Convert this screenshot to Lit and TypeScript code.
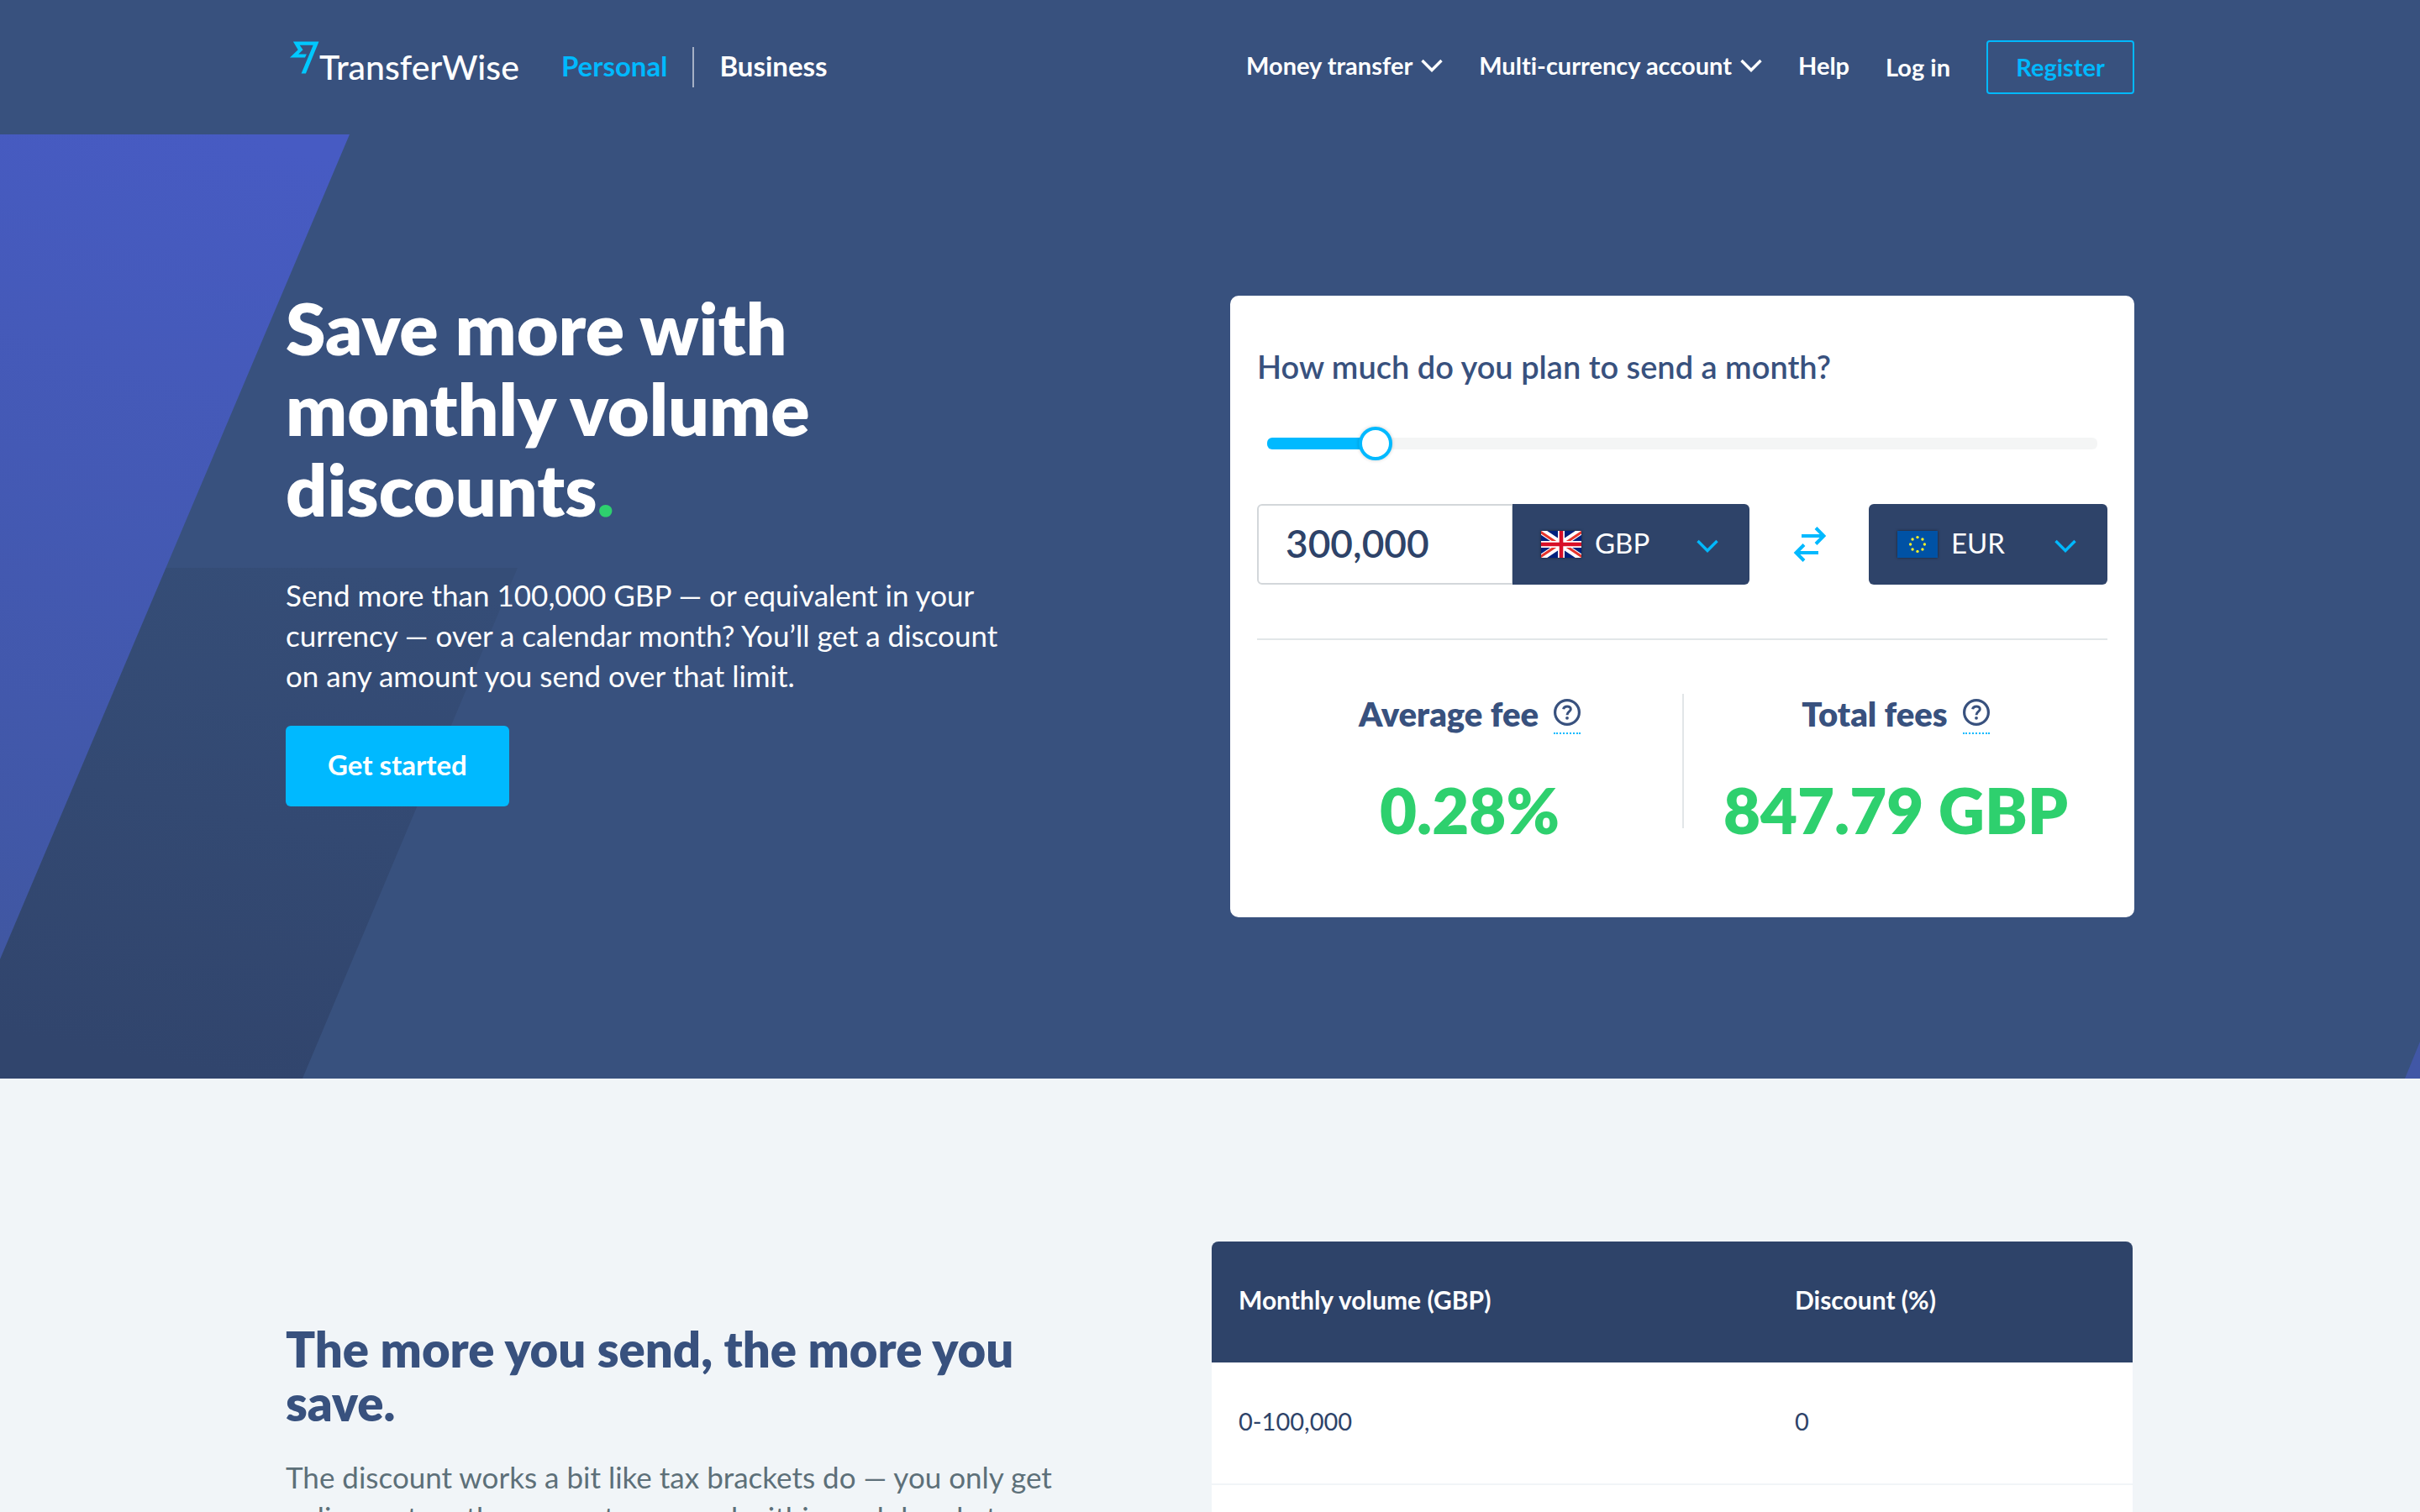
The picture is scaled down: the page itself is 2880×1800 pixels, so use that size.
import { LitElement, html, css, svg } from "lit";
import { customElement, state } from "lit/decorators.js";
import { styleMap } from "lit/directives/style-map.js";

const chevron = html`<svg class="chevron" width="26" height="16" viewBox="0 0 26 16" aria-hidden="true">
  <path d="M1.5 2 13 13.5 24.5 2" fill="none" stroke="currentColor" stroke-width="3.4" />
</svg>`;

const flagGbp = html`<svg class="flag" width="48" height="32" viewBox="0 0 48 32" aria-hidden="true">
  <rect width="48" height="32" fill="#00217d" />
  <path d="M0 0 48 32M48 0 0 32" stroke="#fff" stroke-width="8" />
  <path d="M-1 1 20 15M49 1 28 15M-1 31 20 17M49 31 28 17" stroke="#e5352c" stroke-width="3" />
  <path d="M24 0V32M0 16H48" stroke="#fff" stroke-width="8" />
  <path d="M24 0V32M0 16H48" stroke="#d80f27" stroke-width="4.6" />
</svg>`;

const euDots = [0, 1, 2, 3, 4, 5, 6, 7].map((i) => {
  const a = (i * Math.PI) / 4;
  return svg`<circle cx=${24 + 8.4 * Math.cos(a)} cy=${16 + 8.4 * Math.sin(a)} r="1.7" fill="#f6f02a" />`;
});

const flagEur = html`<svg class="flag" width="48" height="32" viewBox="0 0 48 32" aria-hidden="true">
  <rect width="48" height="32" fill="#0052a5" />
  ${euDots}
</svg>`;

const helpIcon = html`<svg width="32" height="32" viewBox="0 0 32 32" fill="none" stroke="currentColor" aria-hidden="true">
  <circle cx="16" cy="16" r="14.4" stroke-width="3.2" />
  <path d="M11.6 12.2C12.3 7.9 20.3 7.7 20.3 12.2C20.3 15.4 16 15 16 19.2" stroke-width="3" />
  <circle cx="16" cy="22.8" r="1.9" fill="currentColor" stroke="none" />
</svg>`;

const MAX_VOLUME = 2600000;

@customElement("tw-header")
export class TwHeader extends LitElement {
  static styles = css`
    :host {
      display: block; background: #38517e; color: #fff; font-family: Lato, "Open Sans", sans-serif;
      font-variant-ligatures: none;
    }
    .bar {
      box-sizing: border-box; height: 160px; max-width: 2200px; margin: 0 auto;
      display: flex; justify-content: space-between; align-items: center;
    }
    a, button { color: inherit; text-decoration: none; font: inherit; font-variant-ligatures: none; }
    .left, .right, .switch { display: flex; align-items: center; }
    .left { gap: 50px; }
    .switch { gap: 30px; font-size: 33px; font-weight: 700; line-height: 48px; }
    .switch a { padding-bottom: 4px; }
    .switch .active { color: #00b9ff; }
    .rule { width: 2px; height: 48px; background: rgba(255, 255, 255, 0.55); }
    .logo {
      display: flex; align-items: flex-start; height: 64px; padding-left: 4px;
      box-sizing: border-box; font-size: 41px; font-weight: 500; line-height: 48px;
    }
    .logo span { padding-top: 8px; }
    .right { gap: 43px; font-size: 29px; font-weight: 700; line-height: 48px; }
    .menu {
      display: flex; align-items: center; gap: 10px; background: none; border: 0;
      padding: 0 0 4px; line-height: 48px;
    }
    .help { padding-bottom: 4px; }
    .register {
      box-sizing: border-box; width: 176px; height: 64px; border: 2px solid #00b9ff; border-radius: 4px;
      color: #00b9ff; text-align: center; line-height: 60px;
    }
  `;
  render() {
    return html`<header class="bar">
      <div class="left">
        <a class="logo" href="#">
          <svg width="36" height="41" viewBox="0 0 37 41" aria-hidden="true">
            <path fill="#00c8ff" d="M5 1 11 11 1 20.5H19.5L21.5 16.5H11.5L17 11 13 5.3H29.5L15 40H20.5L36.5 1Z" />
          </svg>
          <span>TransferWise</span>
        </a>
        <nav class="switch">
          <a class="active" href="#">Personal</a>
          <div class="rule"></div>
          <a href="#">Business</a>
        </nav>
      </div>
      <nav class="right">
        <button class="menu">Money transfer ${chevron}</button>
        <button class="menu">Multi-currency account ${chevron}</button>
        <a class="help" href="#">Help</a>
        <a href="#">Log in</a>
        <a class="register" href="#">Register</a>
      </nav>
    </header>`;
  }
}

@customElement("tw-calculator")
export class TwCalculator extends LitElement {
  @state() private volume = 300000;

  static styles = css`
    :host {
      display: block; box-sizing: border-box; padding: 60px 32px 106px; background: #fff; border-radius: 10px;
      color: #38517e; font-family: Lato, "Open Sans", sans-serif;
    }
    .question { display: block; font-size: 38px; font-weight: 600; line-height: 48px; margin-bottom: 48px; }
    .slider { padding: 0 12px; margin-bottom: 52px; }
    .range {
      -webkit-appearance: none; appearance: none; display: block; width: 100%; height: 40px; margin: 0;
      background: none; --fill: 0%;
    }
    .range::-webkit-slider-runnable-track {
      height: 14px; border-radius: 6px;
      background: linear-gradient(90deg, #00b9ff var(--fill), #f4f5f5 var(--fill));
    }
    .range::-webkit-slider-thumb {
      -webkit-appearance: none; box-sizing: border-box; width: 40px; height: 40px; margin-top: -13px;
      border: 4px solid #00b9ff; border-radius: 50%; background: #fff; box-shadow: 0 0 4px rgba(0, 0, 0, 0.2);
    }
    .row { display: grid; grid-template-columns: 304fr 282fr 142fr 284fr; height: 96px; }
    .amount {
      box-sizing: border-box; width: 100%; min-width: 0; height: 100%; margin: 0; padding: 0 0 4px 32px;
      border: 2px solid #d3d7da; border-right-width: 1px; border-radius: 6px 0 0 6px; background: #fff;
      color: #2e4369; font: 600 46px Lato, "Open Sans", sans-serif;
    }
    .currency {
      display: grid; grid-template-columns: 34px 48px 1fr 26px 37px; align-items: center;
      background: #2e4369; color: #fff; border-radius: 6px; overflow: hidden;
    }
    .amount + .currency { border-radius: 0 6px 6px 0; }
    .currency select {
      grid-column: 1 / -1; grid-row: 1; width: 100%; height: 96px; -webkit-appearance: none; appearance: none;
      border: 0; margin: 0; padding: 0 0 4px 98px; background: none; color: inherit;
      font: 400 33px Lato, "Open Sans", sans-serif;
    }
    .flag { grid-column: 2; grid-row: 1; pointer-events: none; box-shadow: 0 0 3px rgba(0, 0, 0, 0.5); }
    .currency .chevron { grid-column: 4; grid-row: 1; pointer-events: none; color: #00b9ff; padding-top: 4px; }
    .swap { display: flex; align-items: center; justify-content: center; padding: 0; border: 0; background: none; }
    .divider { height: 2px; margin: 64px 0; border: 0; background: #e2e6e8; }
    .stats { display: grid; grid-template-columns: 1fr 1fr; }
    .stat { text-align: center; line-height: 44px; }
    .stat + .stat { border-left: 2px solid #e2e6e8; }
    .name {
      display: flex; justify-content: center; align-items: flex-end; gap: 18px; height: 48px;
      font-size: 40px; font-weight: 800;
    }
    .name span { align-self: flex-start; padding-top: 2px; }
    .tip {
      display: block; padding: 0 0 8px; border: 0; border-bottom: 2px dotted #00b9ff; background: none;
      color: inherit; line-height: 0;
    }
    .value { margin-top: 68px; color: #2ed06e; font-size: 76px; font-weight: 800; white-space: nowrap; }
  `;

  private onSlide(e: Event) {
    this.volume = Number((e.target as HTMLInputElement).value);
  }

  private stat(name: string, value: string) {
    return html`<div class="stat">
      <div class="name"><span>${name}</span><button class="tip" aria-label=${name}>${helpIcon}</button></div>
      <div class="value">${value}</div>
    </div>`;
  }

  render() {
    const fill = styleMap({ "--fill": `${(this.volume / MAX_VOLUME) * 96 + 2}%` });
    return html`
      <label class="question" for="volume">How much do you plan to send a month?</label>
      <div class="slider">
        <input class="range" id="volume" type="range" min="0" max=${MAX_VOLUME} step="10000"
          .value=${String(this.volume)} style=${fill} @input=${this.onSlide} />
      </div>
      <div class="row">
        <input class="amount" type="text" aria-label="Amount" .value=${this.volume.toLocaleString("en-GB")} />
        <div class="currency">
          <select aria-label="From"><option>GBP</option></select>
          ${flagGbp}${chevron}
        </div>
        <button class="swap" aria-label="Swap">
          <svg width="40" height="42" viewBox="0 0 40 42" fill="none" stroke="#00b9ff" stroke-width="4" aria-hidden="true">
            <path d="M11 11H37M28 1.5 37.5 11 28 20.5M31 31H5M14 21.5 4.5 31 14 40.5" />
          </svg>
        </button>
        <div class="currency">
          <select aria-label="To"><option>EUR</option></select>
          ${flagEur}${chevron}
        </div>
      </div>
      <hr class="divider" />
      <div class="stats">
        ${this.stat("Average fee", "0.28%")}
        ${this.stat("Total fees", "847.79 GBP")}
      </div>
    `;
  }
}

@customElement("app-root")
export class AppRoot extends LitElement {
  static styles = css`
    :host {
      display: flex; flex-direction: column; height: 100vh; overflow: hidden; background: #f1f5f8;
      font-family: Lato, "Open Sans", sans-serif;
    }
    tw-header { flex: none; }
    h1, h2, p { margin: 0; }
    .hero { flex: none; position: relative; box-sizing: border-box; padding: 182px 0 192px; background: #38517e; color: #fff; }
    .shapes { position: absolute; inset: 0; width: 100%; height: 100%; }
    .content { position: relative; display: grid; align-items: start; max-width: 2200px; margin: 0 auto; }
    .hero .content { grid-template-columns: 1124fr 1076fr; }
    .pitch { max-width: 880px; }
    h1 { font-size: 86px; font-weight: 800; line-height: 96px; }
    h1 span { color: #2ed06e; }
    p { font-size: 35px; line-height: 48px; }
    .pitch p { margin: 54px 0 36px; }
    .cta {
      box-sizing: border-box; display: inline-block; height: 96px; padding: 0 50px; border-radius: 6px;
      background: #00b9ff; color: #fff; font-size: 33px; font-weight: 700; line-height: 93px; text-decoration: none;
    }
    .hero tw-calculator { margin-top: 10px; }
    .volume { flex: 1; min-height: 0; padding-top: 194px; }
    .volume .content { grid-template-columns: 1102fr 1098fr; }
    .explain { max-width: 924px; padding-top: 96px; color: #5d7079; }
    h2 { margin-bottom: 32px; color: #38517e; font-size: 58px; font-weight: 800; line-height: 64px; }
    .tiers {
      border-collapse: separate; border-spacing: 0; width: 100%; padding-right: 2px; table-layout: fixed;
      color: #2e4369; text-align: left; font-size: 29px;
    }
    .tiers th, .tiers td { box-sizing: border-box; height: 144px; padding: 0 32px 6px; }
    .tiers th { background: #2e4369; color: #fff; font-size: 30px; font-weight: 700; }
    .tiers th:first-child { width: 662px; border-top-left-radius: 8px; }
    .tiers th:last-child { border-top-right-radius: 8px; }
    .tiers td { height: 146px; background: #fff; border-bottom: 2px solid #f1f5f8; }
  `;

  render() {
    return html`
      <tw-header></tw-header>
      <section class="hero">
        <svg class="shapes" viewBox="0 0 2880 1124" preserveAspectRatio="none" aria-hidden="true">
          <defs>
            <linearGradient id="violet" gradientUnits="userSpaceOnUse" x1="300" y1="0" x2="0" y2="980">
              <stop offset="0" stop-color="#475bc3" /><stop offset="1" stop-color="#4057a2" />
            </linearGradient>
            <linearGradient id="shade" gradientUnits="userSpaceOnUse" x1="400" y1="516" x2="280" y2="1124">
              <stop offset="0" stop-color="#354d77" /><stop offset="1" stop-color="#31456d" />
            </linearGradient>
          </defs>
          <path d="M0 516H616L360 1124H0Z" fill="url(#shade)" />
          <path d="M0 0H416L0 982Z" fill="url(#violet)" />
          <path d="M2880 1080V1124H2862Z" fill="#4157a6" />
        </svg>
        <div class="content">
          <div class="pitch">
            <h1>Save more with monthly volume discounts<span>.</span></h1>
            <p>Send more than 100,000 GBP — or equivalent in your currency — over a calendar month? You’ll get a discount on any amount you send over that limit.</p>
            <a class="cta" href="#">Get started</a>
          </div>
          <tw-calculator></tw-calculator>
        </div>
      </section>
      <section class="volume">
        <div class="content">
          <div class="explain">
            <h2>The more you send, the more you save.</h2>
            <p>The discount works a bit like tax brackets do — you only get a discount on the amount you send within each bracket.</p>
          </div>
          <table class="tiers">
            <thead><tr><th>Monthly volume (GBP)</th><th>Discount (%)</th></tr></thead>
            <tbody>
              <tr><td>0-100,000</td><td>0</td></tr>
              <tr><td></td><td></td></tr>
            </tbody>
          </table>
        </div>
      </section>
    `;
  }
}
